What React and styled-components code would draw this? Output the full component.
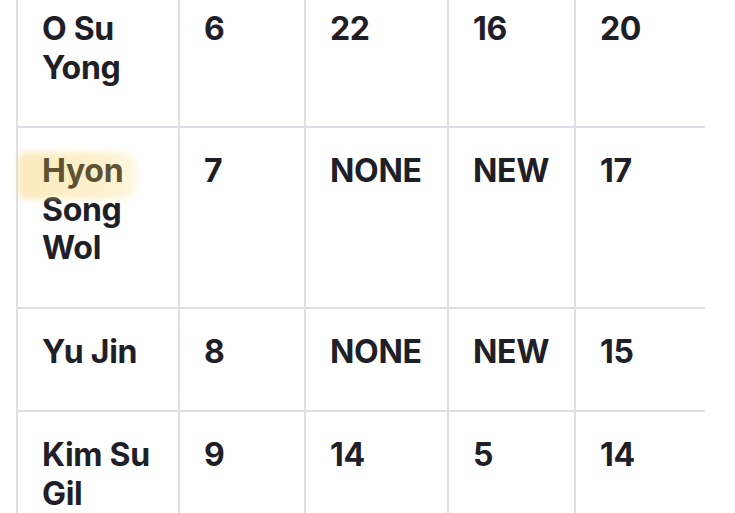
import React from "react";
import styled, { createGlobalStyle } from "styled-components";

const GlobalStyle = createGlobalStyle`
  html, body {
    margin: 0;
    padding: 0;
    background: #ffffff;
    overflow: hidden;
  }
  body {
    font-family: Inter, "Liberation Sans", sans-serif;
    -webkit-font-smoothing: antialiased;
  }
`;

const Page = styled.div`
  width: 735px;
  height: 513px;
  overflow: hidden;
  padding-left: 16px;
  box-sizing: border-box;
`;

const Table = styled.div`
  margin-top: -14px;
  width: 689px;
  display: flex;
  flex-direction: column;
`;

const Row = styled.div`
  display: grid;
  grid-template-columns: 162px 126px 143px 127px 131px;
  border-bottom: 2px solid #dfe0e6;
`;

const Cell = styled.div`
  box-sizing: border-box;
  padding: 24px 24px 39px;
  border-left: 2px solid #dfe0e6;
  font-size: 32px;
  line-height: 38.5px;
  font-weight: 700;
  color: #1f2027;
  letter-spacing: -0.3px;
`;

const Mark = styled.span`
  position: relative;
  color: #5e5232;
  z-index: 0;

  &::before {
    content: "";
    position: absolute;
    left: -24px;
    right: -14px;
    top: 1px;
    bottom: -9px;
    z-index: -1;
    border-radius: 8px 16px 14px 6px;
    background: linear-gradient(
      90deg,
      rgba(247, 214, 120, 0.5) 0%,
      rgba(249, 222, 142, 0.45) 70%,
      rgba(251, 232, 165, 0.3) 100%
    );
    filter: blur(3px);
  }
`;

const rows = [
  { name: ["O Su", "Yong"], vals: ["6", "22", "16", "20"] },
  { name: ["Hyon", "Song", "Wol"], vals: ["7", "NONE", "NEW", "17"], mark: true },
  { name: ["Yu Jin"], vals: ["8", "NONE", "NEW", "15"] },
  { name: ["Kim Su", "Gil"], vals: ["9", "14", "5", "14"] },
];

export default function App() {
  return (
    <>
      <GlobalStyle />
      <Page>
        <Table>
          {rows.map((r, i) => (
            <Row key={i}>
              <Cell>
                {r.name.map((part, j) => (
                  <React.Fragment key={j}>
                    {r.mark && j === 0 ? <Mark>{part}</Mark> : part}
                    {j < r.name.length - 1 && <br />}
                  </React.Fragment>
                ))}
              </Cell>
              {r.vals.map((v, j) => (
                <Cell key={j}>{v}</Cell>
              ))}
            </Row>
          ))}
        </Table>
      </Page>
    </>
  );
}
